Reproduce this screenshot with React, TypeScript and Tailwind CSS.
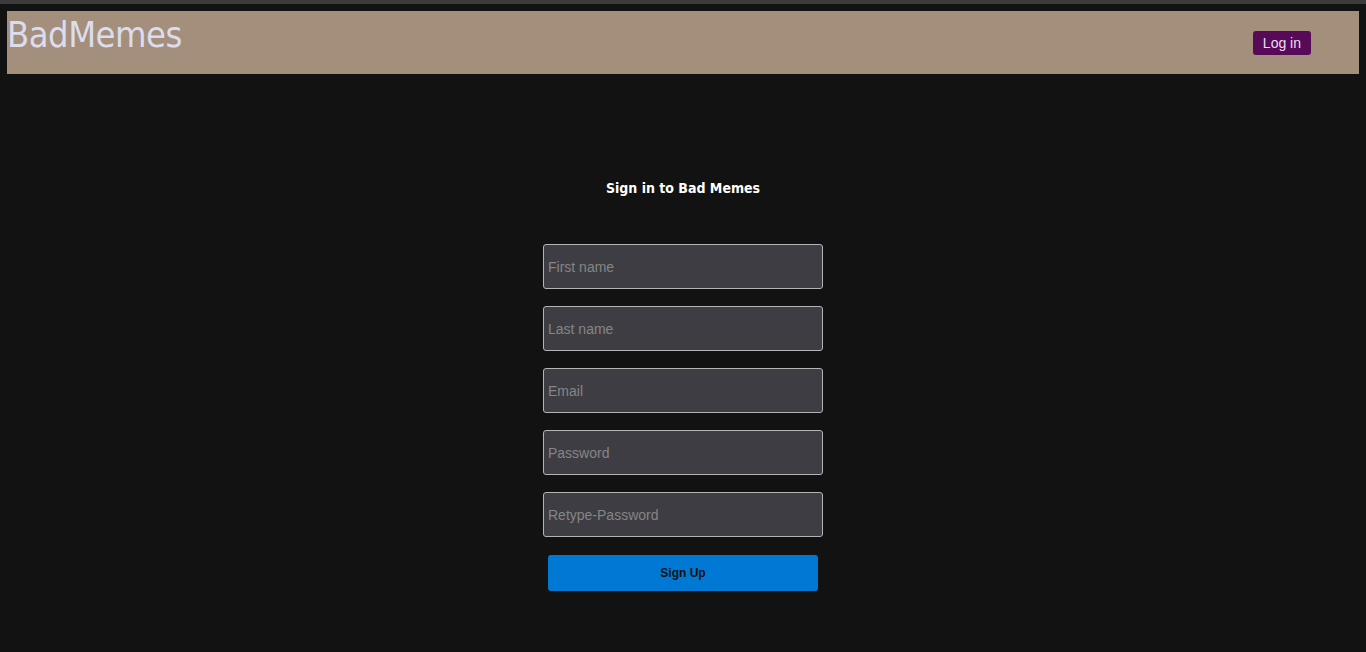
const fields = ["First name", "Last name", "Email", "Password", "Retype-Password"];

export default function App() {
  return (
    <div className="min-h-[652px] bg-[#121212] font-['Liberation_Sans',Arial,sans-serif]">
      <div className="h-[4px] bg-[#3c3c3c]" />
      <header className="mx-[7px] mt-[7px] flex h-[63px] items-center justify-between bg-[#a38f7c] pr-[48px]">
        <h1 className="self-start font-['DejaVu_Sans_Condensed','DejaVu_Sans',sans-serif] text-[36px] leading-[47px] tracking-[-0.5px] text-[#dcdcee]">
          BadMemes
        </h1>
        <button className="mt-[1px] h-[24px] rounded-[3px] bg-[#560a57] px-[10px] text-[14px] leading-[24px] text-[#f3dcf3]">
          Log in
        </button>
      </header>

      <main className="flex flex-col items-center">
        <h2 className="mt-[104px] font-['DejaVu_Sans_Condensed','DejaVu_Sans',sans-serif] text-[14px] font-bold leading-[20px] text-white">
          Sign in to Bad Memes
        </h2>
        <form className="mt-[46px] flex w-[280px] flex-col gap-[17px]">
          {fields.map((f) => (
            <input
              key={f}
              placeholder={f}
              type={f.includes("Password") ? "password" : "text"}
              className="h-[45px] w-full rounded-[3px] border border-[#b4b4b4] bg-[#3e3d43] px-[4px] text-[14px] text-white outline-none placeholder:text-[#858585]"
            />
          ))}
          <button
            type="button"
            className="mx-auto mt-[1px] h-[36px] w-[270px] rounded-[3px] bg-[#0078d4] text-[12px] font-bold text-[#111]"
          >
            Sign Up
          </button>
        </form>
      </main>
    </div>
  );
}
